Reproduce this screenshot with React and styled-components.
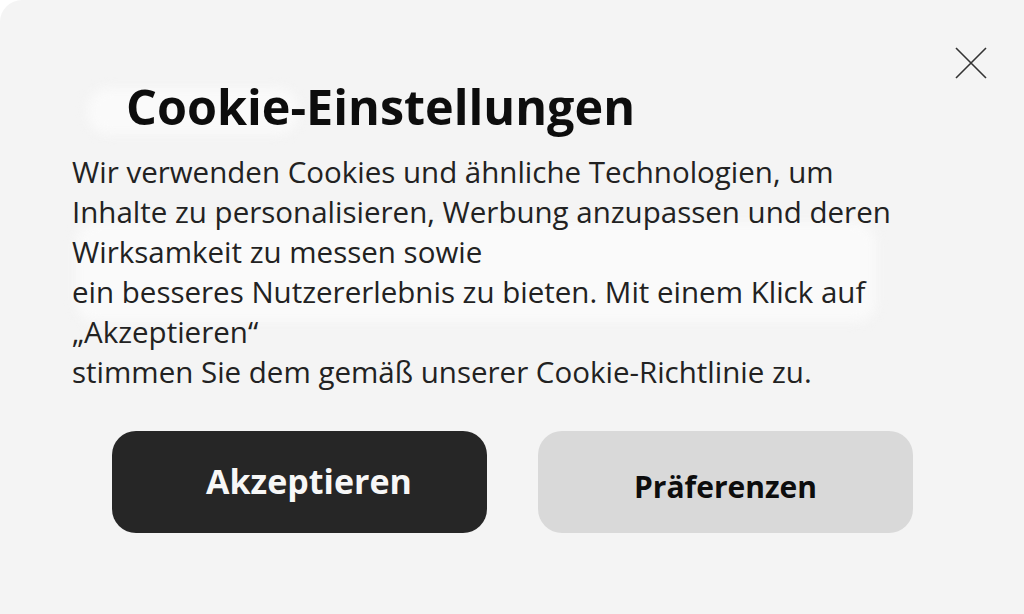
import React from "react";
import styled, { createGlobalStyle } from "styled-components";

const GlobalStyle = createGlobalStyle`
  html, body { margin: 0; padding: 0; background: #ffffff; }
  body { font-family: "Open Sans", "Noto Sans", sans-serif; }
`;

const Dialog = styled.div`
  position: relative;
  width: 1024px;
  height: 614px;
  box-sizing: border-box;
  background: #f4f4f4;
  border-top-left-radius: 22px;
  padding: 74px 72px 0 72px;
  overflow: hidden;
`;

const Ghost = styled.div`
  position: absolute;
  background: #fafafa;
  filter: blur(6px);
  border-radius: 20px;
`;

const CloseButton = styled.button`
  position: absolute;
  top: 46px;
  right: 36px;
  width: 34px;
  height: 34px;
  padding: 0;
  border: none;
  background: transparent;
  cursor: pointer;
  display: flex;
  align-items: center;
  justify-content: center;
`;

const Content = styled.div`
  position: relative;
  display: flex;
  flex-direction: column;
`;

const Title = styled.h1`
  margin: 0 0 14px 54px;
  font-size: 48.5px;
  line-height: 64px;
  font-weight: 700;
  color: #0d0d0d;
  white-space: nowrap;
`;

const Body = styled.p`
  margin: 0;
  font-size: 29.5px;
  line-height: 40px;
  color: #222222;
  white-space: nowrap;
`;

const Actions = styled.div`
  display: flex;
  gap: 51px;
  margin: 39px 0 0 40px;
`;

const Button = styled.button`
  width: 375px;
  height: 102px;
  border: none;
  border-radius: 24px;
  font-family: "Open Sans", "Noto Sans", sans-serif;
  font-weight: 700;
  font-size: ${(p) => (p.$primary ? "34px" : "30px")};
  background: ${(p) => (p.$primary ? "#262626" : "#d9d9d9")};
  color: ${(p) => (p.$primary ? "#f7f7f7" : "#0d0d0d")};
  padding: ${(p) => (p.$primary ? "0 0 2px 19px" : "8px 0 0 0")};
  cursor: pointer;
`;

export default function App() {
  return (
    <>
      <GlobalStyle />
      <Dialog>
        <Ghost style={{ left: 88, top: 88, width: 210, height: 46 }} />
        <Ghost style={{ left: 76, top: 222, width: 800, height: 100 }} />
        <CloseButton aria-label="Schließen">
          <svg width="34" height="34" viewBox="0 0 34 34">
            <path d="M2 2 L32 32 M32 2 L2 32" stroke="#333" strokeWidth="1.6" fill="none" />
          </svg>
        </CloseButton>
        <Content>
          <Title>Cookie-Einstellungen</Title>
          <Body>
            Wir verwenden Cookies und ähnliche Technologien, um
            <br />
            Inhalte zu personalisieren, Werbung anzupassen und deren
            <br />
            Wirksamkeit zu messen sowie
            <br />
            ein besseres Nutzererlebnis zu bieten. Mit einem Klick auf
            <br />
            „Akzeptieren“
            <br />
            stimmen Sie dem gemäß unserer Cookie-Richtlinie zu.
          </Body>
          <Actions>
            <Button $primary>Akzeptieren</Button>
            <Button>Präferenzen</Button>
          </Actions>
        </Content>
      </Dialog>
    </>
  );
}
